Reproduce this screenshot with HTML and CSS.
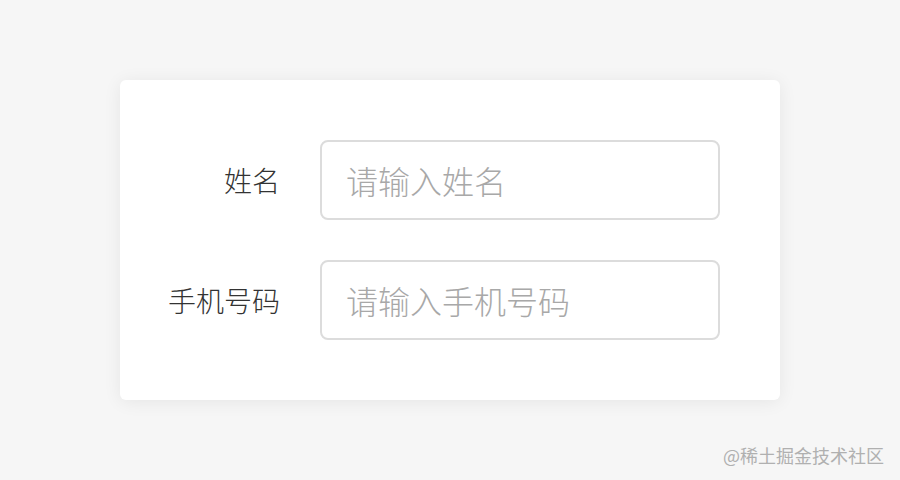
FILE: index.html
```html
<!DOCTYPE html>
<html lang="zh">
<head>
<meta charset="utf-8">
<link rel="stylesheet" href="styles.css">
</head>
<body>
<div class="page">
  <form class="card">
    <div class="row">
      <label class="label">姓名</label>
      <input class="input" type="text" placeholder="请输入姓名">
    </div>
    <div class="row">
      <label class="label">手机号码</label>
      <input class="input" type="text" placeholder="请输入手机号码">
    </div>
  </form>
  <div class="mark">@稀土掘金技术社区</div>
</div>
</body>
</html>
```

FILE: styles.css
```css
html, body {
  margin: 0;
  padding: 0;
  background: #f6f6f6;
}
body {
  width: 900px;
  height: 480px;
  overflow: hidden;
  font-family: "Noto Sans CJK SC", "Noto Sans", sans-serif;
}
.page {
  position: relative;
  width: 900px;
  height: 480px;
  padding-top: 80px;
  box-sizing: border-box;
}
.card {
  margin: 0 0 0 120px;
  width: 660px;
  box-sizing: border-box;
  background: #fff;
  border-radius: 6px;
  box-shadow: 0 2px 18px rgba(0,0,0,0.07);
  padding: 60px 60px 60px 0;
  display: flex;
  flex-direction: column;
  gap: 40px;
}
.row {
  display: flex;
  align-items: center;
}
.label {
  flex: none;
  width: 200px;
  padding-right: 40px;
  box-sizing: border-box;
  text-align: right;
  font-size: 28px;
  font-weight: 300;
  color: #333;
  line-height: 1;
}
.input {
  flex: none;
  width: 400px;
  height: 80px;
  box-sizing: border-box;
  border: 2px solid #dcdcdc;
  border-radius: 8px;
  padding: 0 24px;
  font-family: inherit;
  font-size: 32px;
  font-weight: 300;
  color: #333;
  background: #fff;
  outline: none;
}
.input::placeholder {
  color: #a8a8a8;
}
.mark {
  position: absolute;
  right: 16px;
  bottom: 16px;
  font-size: 18px;
  color: #b0b0b0;
  line-height: 1;
}
```
